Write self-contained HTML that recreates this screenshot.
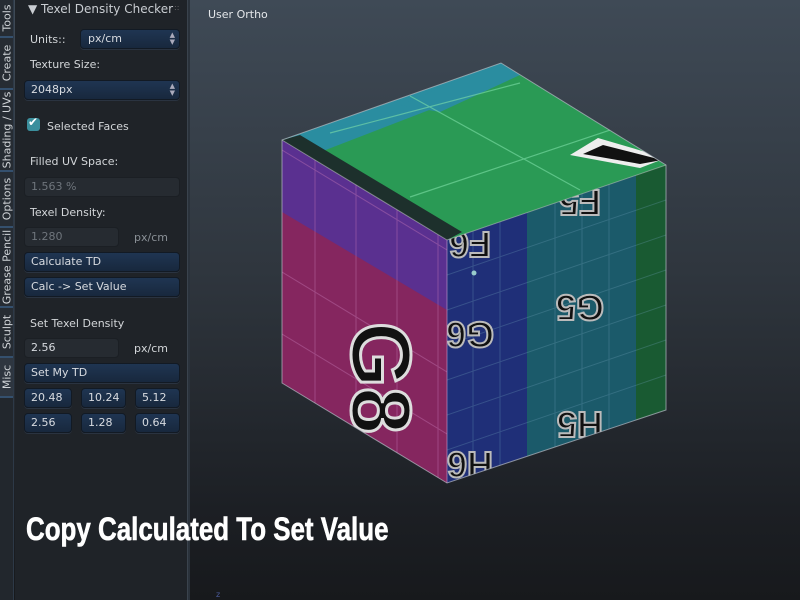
<!DOCTYPE html>
<html><head><meta charset="utf-8"><style>
*{margin:0;padding:0;box-sizing:border-box}
body{width:800px;height:600px;overflow:hidden;position:relative;font-family:"DejaVu Sans","Liberation Sans",sans-serif;background:linear-gradient(#3f4a56 0%,#2f363e 45%,#1c1f24 85%,#17191c 100%)}
#tabs{position:absolute;left:0;top:0;width:14px;height:600px;background:#22272d;border-right:1px solid #2d3947}
.tab{position:absolute;left:0;width:13px;background:#262c33;border-bottom:2px solid #34506e}
.tab span{position:absolute;left:50%;top:50%;transform:translate(-50%,-50%) rotate(-90deg);white-space:nowrap;font-size:11px;color:#d0d4d8}
#panel{position:absolute;left:15px;top:0;width:173px;height:600px;background:#1f2328;border-right:1px solid #3a434d}
#edge{position:absolute;left:188px;top:0;width:2px;height:600px;background:#2a323b}
.t{position:absolute;font-size:11px;color:#d3d6d9;white-space:nowrap}
.btn{position:absolute;height:20px;border-radius:4px;background:linear-gradient(#1f3552,#18283d);border:1px solid #121a24;color:#d8dbe0;font-size:11px;padding-left:6px;line-height:18px;box-shadow:0 1px 0 #2a3340}
.fld{position:absolute;height:20px;border-radius:4px;background:#262b31;border:1px solid #1b1f24;color:#d8dbe0;font-size:11px;padding-left:6px;line-height:18px}
.dis{color:#6f757c}
.arr{position:absolute;right:4px;top:2px;font-size:7px;line-height:7px;color:#aab}
</style></head><body>
<div id="tabs">
<div class="tab" style="top:0;height:38px"><span>Tools</span></div>
<div class="tab" style="top:38px;height:52px"><span>Create</span></div>
<div class="tab" style="top:90px;height:82px"><span>Shading / UVs</span></div>
<div class="tab" style="top:172px;height:56px"><span>Options</span></div>
<div class="tab" style="top:228px;height:80px"><span>Grease Pencil</span></div>
<div class="tab" style="top:308px;height:50px"><span>Sculpt</span></div>
<div class="tab" style="top:358px;height:40px;background:#2e3640"><span>Misc</span></div>
</div>
<div id="panel"></div>
<div id="edge"></div>
<div class="t" style="left:28px;top:2px;font-size:12px;color:#c9cdd2">▼ Texel Density Checker</div>
<div class="t" style="left:174px;top:3px;color:#666;font-size:8px">::</div>
<div class="t" style="left:30px;top:33px">Units::</div>
<div class="btn" style="left:80px;top:29px;width:100px;padding-left:7px">px/cm<div class="arr">▲<br>▼</div></div>
<div class="t" style="left:30px;top:58px">Texture Size:</div>
<div class="btn" style="left:24px;top:80px;width:156px">2048px<div class="arr">▲<br>▼</div></div>
<div style="position:absolute;left:27px;top:118px;width:13px;height:13px;border-radius:3px;background:#3b8f9d"></div>
<div class="t" style="left:28px;top:115px;color:#fff;font-size:12px">✔</div>
<div class="t" style="left:47px;top:120px">Selected Faces</div>
<div class="t" style="left:30px;top:155px">Filled UV Space:</div>
<div class="fld dis" style="left:24px;top:177px;width:156px">1.563 %</div>
<div class="t" style="left:30px;top:206px">Texel Density:</div>
<div class="fld dis" style="left:24px;top:227px;width:95px">1.280</div>
<div class="t dis" style="left:134px;top:231px;color:#8a9096">px/cm</div>
<div class="btn" style="left:24px;top:252px;width:156px">Calculate TD</div>
<div class="btn" style="left:24px;top:277px;width:156px">Calc -&gt; Set Value</div>
<div class="t" style="left:30px;top:317px">Set Texel Density</div>
<div class="fld" style="left:24px;top:338px;width:95px">2.56</div>
<div class="t" style="left:134px;top:342px">px/cm</div>
<div class="btn" style="left:24px;top:363px;width:156px">Set My TD</div>
<div class="btn" style="left:24px;top:388px;width:48px">20.48</div>
<div class="btn" style="left:81px;top:388px;width:45px">10.24</div>
<div class="btn" style="left:135px;top:388px;width:45px">5.12</div>
<div class="btn" style="left:24px;top:413px;width:48px">2.56</div>
<div class="btn" style="left:81px;top:413px;width:45px">1.28</div>
<div class="btn" style="left:135px;top:413px;width:45px">0.64</div>
<div class="t" style="left:208px;top:8px;color:#e4e7ea">User Ortho</div>
<svg style="position:absolute;left:0;top:0" width="800" height="600">
<defs>
<clipPath id="cl"><polygon points="282,140 447,240 447,483 282,383"/></clipPath>
<clipPath id="cr"><polygon points="447,240 666,165 666,410 447,483"/></clipPath>
<clipPath id="ct"><polygon points="282,140 501,63 666,165 447,240"/></clipPath>
</defs>
<g clip-path="url(#cl)">
<rect x="280" y="100" width="170" height="400" fill="#85265f"/>
<polygon points="282,140 447,240 447,310 282,212" fill="#5a3090"/>
<g stroke="#c77bb8" stroke-width="1" opacity=".4">
<line x1="315" y1="100" x2="315" y2="500"/><line x1="356" y1="100" x2="356" y2="500"/><line x1="397" y1="100" x2="397" y2="500"/><line x1="438" y1="100" x2="438" y2="500"/>
<line x1="282" y1="272" x2="447" y2="372"/><line x1="282" y1="334" x2="447" y2="434"/><line x1="282" y1="150" x2="447" y2="250"/>
</g>
<text x="352" y="378" transform="rotate(90 352 378)" font-family="Liberation Sans" font-weight="bold" font-size="84" fill="#111" stroke="#ddd" stroke-width="3" text-anchor="middle">G8</text>
</g>
<g clip-path="url(#cr)">
<rect x="445" y="150" width="85" height="340" fill="#1f2f78"/>
<rect x="527" y="150" width="110" height="340" fill="#1b5a6a"/>
<rect x="636" y="150" width="32" height="340" fill="#195a32"/>
<g stroke="#6fa0b8" stroke-width="1" opacity=".3">
<line x1="473" y1="150" x2="473" y2="490"/><line x1="500" y1="150" x2="500" y2="490"/><line x1="555" y1="150" x2="555" y2="490"/><line x1="582" y1="150" x2="582" y2="490"/><line x1="609" y1="150" x2="609" y2="490"/>
<line x1="447" y1="275" x2="666" y2="200"/><line x1="447" y1="310" x2="666" y2="235"/><line x1="447" y1="345" x2="666" y2="270"/><line x1="447" y1="380" x2="666" y2="305"/><line x1="447" y1="415" x2="666" y2="340"/><line x1="447" y1="450" x2="666" y2="375"/>
</g>
<g font-family="Liberation Sans" font-weight="bold" font-size="36" fill="#111" stroke="#bbb" stroke-width="2" text-anchor="middle">
<text transform="translate(580,295) rotate(180)">G5</text>
<text transform="translate(470,322) rotate(180)">G6</text>
<text transform="translate(580,412) rotate(180)">H5</text>
<text transform="translate(470,452) rotate(180)">H6</text>
<text transform="translate(580,190) rotate(180)">F5</text>
<text transform="translate(470,232) rotate(180)">F6</text>
</g>
<circle cx="474" cy="273" r="2.5" fill="#9cc"/>
</g>
<g clip-path="url(#ct)">
<rect x="280" y="60" width="390" height="185" fill="#2a9a55"/>
<polygon points="282,140 501,63 520,75 310,156" fill="#2a8da0"/>
<polygon points="400,105 501,63 520,75 440,112" fill="#2a8da0"/>
<polygon points="282,140 300,135 462,232 447,240" fill="#1d302c"/>
<g stroke="#7fe0a8" stroke-width="1.2" opacity=".6">
<line x1="410" y1="96" x2="580" y2="190"/>
<line x1="410" y1="197" x2="670" y2="110"/>
<line x1="330" y1="133" x2="520" y2="83"/>
</g>
<polygon points="570,155 598,138 666,158 640,168" fill="#eee"/>
<polygon points="583,154 603,145 662,160 640,164" fill="#111"/>
</g>
<polygon points="282,140 501,63 666,165 666,410 447,483 282,383" fill="none" stroke="#b6bcc6" stroke-width="1" opacity=".7"/>
<line x1="447" y1="240" x2="447" y2="483" stroke="#c9a0d0" stroke-width="1" opacity=".6"/>
<line x1="282" y1="140" x2="447" y2="240" stroke="#ccc" opacity=".5"/>
<line x1="447" y1="240" x2="666" y2="165" stroke="#ccc" opacity=".5"/>
</svg>
<div style="position:absolute;left:26px;top:511px;font-family:'Liberation Sans',sans-serif;font-weight:bold;font-size:32px;color:#fff;white-space:nowrap;transform-origin:0 0;transform:scaleX(0.81);-webkit-text-stroke:0.6px #fff">Copy Calculated To Set Value</div>
<div class="t" style="left:216px;top:590px;color:#4a5a9a;font-size:8px">z</div>
</body></html>
